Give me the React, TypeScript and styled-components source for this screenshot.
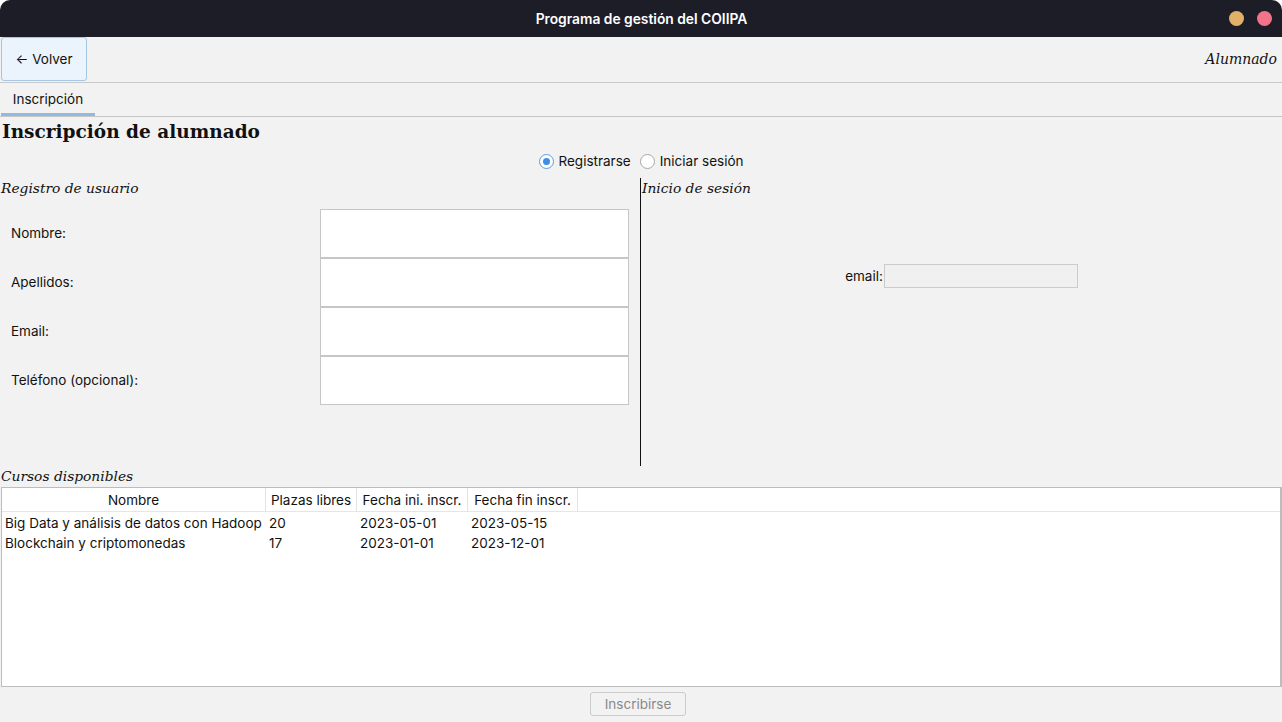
import React from "react";
import styled, { createGlobalStyle } from "styled-components";

const Global = createGlobalStyle`
  html, body { margin: 0; padding: 0; background: #ffffff; }
  body { font-family: Inter, "Noto Sans", sans-serif; }
  * { box-sizing: border-box; }
`;

const SANS = `Inter, "Noto Sans", sans-serif`;
const SERIF = `"DejaVu Serif", "Liberation Serif", serif`;
const FS = "13.5px";

const Window = styled.div`
  width: 1282px;
  height: 722px;
  background: #f2f2f2;
  display: flex;
  flex-direction: column;
  border-radius: 10px 10px 0 0;
  overflow: hidden;
`;

const TitleBar = styled.div`
  height: 37px;
  flex: none;
  background: #1d1d28;
  display: flex;
  align-items: center;
  justify-content: center;
  position: relative;
  color: #ffffff;
  font-family: ${SANS};
  font-weight: 600;
  font-size: 13.8px;
  padding-left: 1px;
`;

const Dots = styled.div`
  position: absolute;
  right: 10px;
  top: 11px;
  display: flex;
  gap: 13px;
`;

const Dot = styled.span<{ $c: string }>`
  width: 15px;
  height: 15px;
  border-radius: 50%;
  background: ${(p) => p.$c};
`;

const Toolbar = styled.div`
  height: 46px;
  flex: none;
  display: flex;
  align-items: flex-start;
  justify-content: space-between;
  border-bottom: 1px solid #c9c9c9;
  padding: 0 5px 0 1px;
`;

const BackButton = styled.button`
  width: 86px;
  height: 44px;
  margin: 0;
  background: #ebf3fc;
  border: 1px solid #a6c6e6;
  border-radius: 3px;
  font-family: ${SANS};
  font-size: ${FS};
  color: #111;
  padding: 0 0 1px 0;
`;

const RoleLabel = styled.span`
  font-family: ${SERIF};
  font-style: italic;
  font-size: 14px;
  line-height: 44px;
  color: #111;
`;

const TabBar = styled.div`
  height: 34px;
  flex: none;
  display: flex;
  border-bottom: 1px solid #c6c6c6;
  padding-left: 1px;
`;

const Tab = styled.div`
  width: 94px;
  display: flex;
  align-items: center;
  justify-content: center;
  font-family: ${SANS};
  font-size: ${FS};
  color: #111;
  border-bottom: 3px solid #92b9e0;
  padding-top: 2px;
`;

const Content = styled.div`
  flex: 1;
  display: flex;
  flex-direction: column;
`;

const Heading = styled.h1`
  margin: 0;
  padding: 2px 0 0 2px;
  height: 29px;
  font-family: ${SERIF};
  font-weight: bold;
  font-size: 18.5px;
  line-height: 26px;
  color: #111;
`;

const RadioRow = styled.div`
  height: 32px;
  display: flex;
  justify-content: center;
  align-items: center;
  gap: 9px;
  font-family: ${SANS};
  font-size: ${FS};
  color: #111;
  padding-bottom: 2px;
`;

const RadioOption = styled.label`
  display: flex;
  align-items: center;
  gap: 5px;
`;

const RadioCircle = styled.span<{ $on?: boolean }>`
  width: 15px;
  height: 15px;
  border-radius: 50%;
  border: 1px solid ${(p) => (p.$on ? "#5a9be0" : "#a8a8a8")};
  background: #fff;
  display: flex;
  align-items: center;
  justify-content: center;
  &::after {
    content: "";
    width: 7px;
    height: 7px;
    border-radius: 50%;
    background: ${(p) => (p.$on ? "#3d8ee6" : "transparent")};
  }
`;

const Panels = styled.div`
  height: 288px;
  display: grid;
  grid-template-columns: 640px 1fr;
`;

const LeftPanel = styled.div`
  display: flex;
  flex-direction: column;
`;

const RightPanel = styled.div`
  border-left: 1px solid #111;
  display: flex;
  flex-direction: column;
`;

const SectionTitle = styled.div`
  font-family: ${SERIF};
  font-style: italic;
  font-size: 13.8px;
  color: #111;
  height: 20px;
  line-height: 20px;
  padding-left: 1px;
`;

const Form = styled.div`
  margin-top: 11px;
  display: flex;
  flex-direction: column;
`;

const FieldRow = styled.div`
  display: grid;
  grid-template-columns: 320px 309px;
  height: 49px;
  align-items: center;
`;

const FieldLabel = styled.span`
  font-family: ${SANS};
  font-size: ${FS};
  color: #111;
  padding-left: 11px;
  padding-bottom: 1px;
`;

const TextBox = styled.div`
  height: 49px;
  background: #fff;
  border: 1px solid #c6c6c6;
`;

const LoginRow = styled.div`
  margin-top: 66px;
  display: flex;
  align-items: center;
  justify-content: center;
  gap: 1px;
  font-family: ${SANS};
  font-size: ${FS};
  color: #111;
  padding-right: 0px;
`;

const LoginInput = styled.div`
  width: 194px;
  height: 24px;
  background: #f0f0f0;
  border: 1px solid #cbcbcb;
`;

const TableCaption = styled.div`
  font-family: ${SERIF};
  font-style: italic;
  font-size: 13.8px;
  color: #111;
  height: 21px;
  line-height: 20px;
  padding-left: 1px;
`;

const TableBox = styled.div`
  height: 200px;
  margin: 0 0 0 1px;
  background: #fff;
  border: 1px solid #bdbdbd;
  border-right-width: 2px;
  font-family: ${SANS};
  font-size: ${FS};
  color: #111;
`;

const cols = "264px 91px 111px 110px 1fr";

const HeaderRow = styled.div`
  display: grid;
  grid-template-columns: ${cols};
  height: 24px;
  border-bottom: 1px solid #e6e6e6;
`;

const HeaderCell = styled.div<{ $last?: boolean }>`
  display: flex;
  align-items: center;
  justify-content: center;
  border-right: ${(p) => (p.$last ? "none" : "1px solid #e3e3e3")};
`;

const Body = styled.div`
  padding-top: 1px;
`;

const Row = styled.div`
  display: grid;
  grid-template-columns: ${cols};
  height: 20px;
  align-items: center;
`;

const Cell = styled.div`
  padding-left: 3px;
  white-space: nowrap;
`;

const Footer = styled.div`
  flex: 1;
  display: flex;
  justify-content: center;
  align-items: center;
  padding-bottom: 2px;
  padding-right: 6px;
`;

const SubmitButton = styled.button`
  width: 96px;
  height: 24px;
  background: #f2f2f2;
  border: 1px solid #cbcbcb;
  border-radius: 3px;
  font-family: ${SANS};
  font-size: ${FS};
  color: #8a8a8a;
  padding: 0;
`;

const fields = ["Nombre:", "Apellidos:", "Email:", "Teléfono (opcional):"];
const courses = [
  ["Big Data y análisis de datos con Hadoop", "20", "2023-05-01", "2023-05-15"],
  ["Blockchain y criptomonedas", "17", "2023-01-01", "2023-12-01"],
];
const headers = ["Nombre", "Plazas libres", "Fecha ini. inscr.", "Fecha fin inscr."];

export default function App() {
  return (
    <>
      <Global />
      <Window>
        <TitleBar>
          Programa de gestión del COIIPA
          <Dots>
            <Dot $c="#e3b06a" />
            <Dot $c="#f2738a" />
          </Dots>
        </TitleBar>
        <Toolbar>
          <BackButton>← Volver</BackButton>
          <RoleLabel>Alumnado</RoleLabel>
        </Toolbar>
        <TabBar>
          <Tab>Inscripción</Tab>
        </TabBar>
        <Content>
          <Heading>Inscripción de alumnado</Heading>
          <RadioRow>
            <RadioOption>
              <RadioCircle $on />
              Registrarse
            </RadioOption>
            <RadioOption>
              <RadioCircle />
              Iniciar sesión
            </RadioOption>
          </RadioRow>
          <Panels>
            <LeftPanel>
              <SectionTitle>Registro de usuario</SectionTitle>
              <Form>
                {fields.map((f) => (
                  <FieldRow key={f}>
                    <FieldLabel>{f}</FieldLabel>
                    <TextBox />
                  </FieldRow>
                ))}
              </Form>
            </LeftPanel>
            <RightPanel>
              <SectionTitle>Inicio de sesión</SectionTitle>
              <LoginRow>
                email:
                <LoginInput />
              </LoginRow>
            </RightPanel>
          </Panels>
          <TableCaption>Cursos disponibles</TableCaption>
          <TableBox>
            <HeaderRow>
              {headers.map((h) => (
                <HeaderCell key={h}>{h}</HeaderCell>
              ))}
              <HeaderCell $last />
            </HeaderRow>
            <Body>
              {courses.map((c) => (
                <Row key={c[0]}>
                  {c.map((v, i) => (
                    <Cell key={i}>{v}</Cell>
                  ))}
                </Row>
              ))}
            </Body>
          </TableBox>
          <Footer>
            <SubmitButton disabled>Inscribirse</SubmitButton>
          </Footer>
        </Content>
      </Window>
    </>
  );
}
